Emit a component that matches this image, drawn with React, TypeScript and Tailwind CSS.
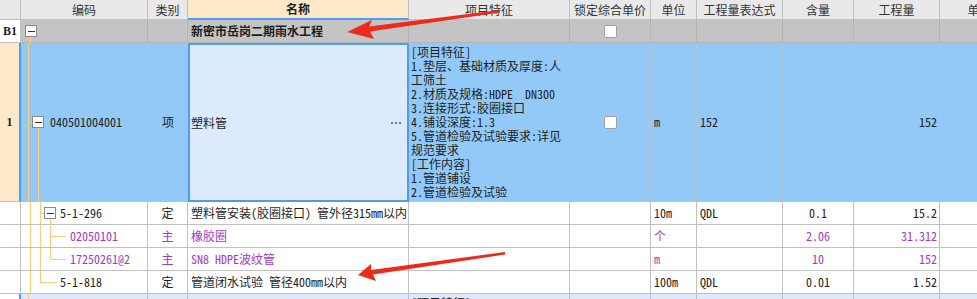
import React from 'react'

const cols = 'grid grid-cols-[21px_127px_40px_221px_161px_81px_46px_86px_71px_86px_80px]'

const features = [
  '[项目特征]',
  '1.垫层、基础材质及厚度:人',
  '工筛土',
  '2.材质及规格:HDPE  DN300',
  '3.连接形式:胶圈接口',
  '4.铺设深度:1.3',
  '5.管道检验及试验要求:详见',
  '规范要求',
  '[工作内容]',
  '1.管道铺设',
  '2.管道检验及试验',
]

function VLine({ left, top = 0, height }: { left: number; top?: number; height?: number }) {
  return (
    <div
      className="absolute w-px bg-[#ffc97e]"
      style={{ left, top, height: height ?? '100%' }}
    />
  )
}

function HLine({ left, top, width }: { left: number; top: number; width: number }) {
  return <div className="absolute h-px bg-[#ffc97e]" style={{ left, top, width }} />
}

function Toggle({ left, top }: { left: number; top: number }) {
  return (
    <div
      className="absolute flex h-[12px] w-[12px] items-center justify-center border border-[#8a8a8a] bg-white"
      style={{ left, top }}
    >
      <div className="h-px w-[7px] bg-[#333]" />
    </div>
  )
}

function Checkbox() {
  return <div className="h-[13px] w-[13px] rounded-[2px] border border-[#a0a0a0] bg-white" />
}

type SubRow = {
  code: string
  type: string
  name: string
  unit: string
  expr: string
  content: string
  qty: string
  purple?: boolean
  indent: number
  tree: React.ReactNode
}

const subRows: SubRow[] = [
  {
    code: '5-1-296',
    type: '定',
    name: '塑料管安装(胶圈接口) 管外径315mm以内',
    unit: '10m',
    expr: 'QDL',
    content: '0.1',
    qty: '15.2',
    indent: 41,
    tree: (
      <>
        <VLine left={9} />
        <VLine left={19} />
        <HLine left={19} top={11} width={4} />
        <Toggle left={23} top={5} />
        <VLine left={29} top={17} height={6} />
      </>
    ),
  },
  {
    code: '02050101',
    type: '主',
    name: '橡胶圈',
    unit: '个',
    expr: '',
    content: '2.06',
    qty: '31.312',
    purple: true,
    indent: 51,
    tree: (
      <>
        <VLine left={9} />
        <VLine left={19} />
        <VLine left={29} />
        <HLine left={29} top={11} width={16} />
      </>
    ),
  },
  {
    code: '17250261@2',
    type: '主',
    name: 'SN8 HDPE波纹管',
    unit: 'm',
    expr: '',
    content: '10',
    qty: '152',
    purple: true,
    indent: 51,
    tree: (
      <>
        <VLine left={9} />
        <VLine left={19} />
        <VLine left={29} height={12} />
        <HLine left={29} top={11} width={16} />
      </>
    ),
  },
  {
    code: '5-1-818',
    type: '定',
    name: '管道闭水试验 管径400mm以内',
    unit: '100m',
    expr: 'QDL',
    content: '0.01',
    qty: '1.52',
    indent: 41,
    tree: (
      <>
        <VLine left={9} />
        <VLine left={19} height={12} />
        <HLine left={19} top={11} width={17} />
      </>
    ),
  },
]

const headers = ['编码', '类别', '名称', '项目特征', '锁定综合单价', '单位', '工程量表达式', '含量', '工程量', '单价']

export default function App() {
  const line = 'border-r border-b border-[#c0c0c0]'
  const blueLine = 'border-r border-b border-r-[#b3c3d3] border-b-[#c0c0c0]'
  const greyLine = 'border-r border-b border-[#b4b4b4]'

  return (
    <div className="relative h-[299px] w-[977px] overflow-hidden bg-white font-['Noto_Sans_CJK_SC',sans-serif] text-[12px] leading-[14px] text-[#1e1e1e] [font-feature-settings:'hwid']">
      {/* header */}
      <div className={`${cols} h-[20px]`}>
        <div className={`${line} bg-[#e9e9e9]`} />
        {headers.map((h) =>
          h === '名称' ? (
            <div
              key={h}
              className="flex items-center justify-center border-r border-b-2 border-r-[#c0c0c0] border-b-[#4a9cf8] bg-[#ffe9c9] font-bold"
            >
              {h}
            </div>
          ) : (
            <div key={h} className={`${line} flex items-center justify-center bg-[#e9e9e9] text-[#333]`}>
              {h}
            </div>
          ),
        )}
      </div>

      {/* B1 */}
      <div className={`${cols} h-[23px]`}>
        <div className={`${line} flex items-center justify-center bg-white font-['Liberation_Serif',serif] font-bold`}>
          B1
        </div>
        <div className={`${greyLine} relative bg-[#c4c4c4]`}>
          <Toggle left={4} top={5} />
          <VLine left={9} top={17} height={6} />
        </div>
        <div className={`${greyLine} bg-[#c4c4c4]`} />
        <div className={`${greyLine} flex items-center bg-[#c4c4c4] pl-[3px] font-bold`}>新密市岳岗二期雨水工程</div>
        <div className={`${greyLine} bg-[#c4c4c4]`} />
        <div className={`${greyLine} flex items-center justify-center bg-[#c4c4c4]`}>
          <Checkbox />
        </div>
        <div className={`${greyLine} bg-[#c4c4c4]`} />
        <div className={`${greyLine} bg-[#c4c4c4]`} />
        <div className={`${greyLine} bg-[#c4c4c4]`} />
        <div className={`${greyLine} bg-[#c4c4c4]`} />
        <div className={`${greyLine} bg-[#c4c4c4]`} />
      </div>

      {/* 1 */}
      <div className={`${cols} h-[159px]`}>
        <div className="flex items-center justify-center border-r-2 border-b border-r-[#4a9cf8] border-b-[#c0c0c0] bg-[#ffe9c9] font-['Liberation_Serif',serif] font-bold">
          1
        </div>
        <div className={`${blueLine} relative flex items-center bg-[#92c9f6] pl-[29px]`}>
          <VLine left={7} />
          <HLine left={7} top={79} width={5} />
          <Toggle left={11} top={73} />
          <VLine left={17} top={85} height={74} />
          040501004001
        </div>
        <div className="flex items-center justify-center border-b border-b-[#c0c0c0] bg-[#92c9f6]">项</div>
        <div className="flex items-center justify-between border-2 border-[#4a9cf8] bg-[#dde9fc] pr-[6px] pl-[1px]">
          <span>塑料管</span>
          <span className="flex gap-[2px]">
            <span className="h-[2px] w-[2px] bg-[#3d88e0]" />
            <span className="h-[2px] w-[2px] bg-[#3d88e0]" />
            <span className="h-[2px] w-[2px] bg-[#3d88e0]" />
          </span>
        </div>
        <div className={`${blueLine} bg-[#92c9f6] pt-[2px] pl-[2px]`}>
          {features.map((f) => (
            <div key={f} className="whitespace-pre">
              {f}
            </div>
          ))}
        </div>
        <div className={`${blueLine} flex items-center justify-center bg-[#92c9f6]`}>
          <Checkbox />
        </div>
        <div className={`${blueLine} flex items-center bg-[#92c9f6] pl-[3px]`}>m</div>
        <div className={`${blueLine} flex items-center bg-[#92c9f6] pl-[3px]`}>152</div>
        <div className={`${blueLine} bg-[#92c9f6]`} />
        <div className={`${blueLine} flex items-center justify-end bg-[#92c9f6] pr-[2px]`}>152</div>
        <div className={`${blueLine} bg-[#92c9f6]`} />
      </div>

      {/* sub rows */}
      {subRows.map((r) => {
        const color = r.purple ? 'text-[#a23cc6]' : ''
        return (
          <div key={r.code} className={`${cols} h-[23px] ${color}`}>
            <div className={`${line} bg-white`} />
            <div className={`${line} relative flex items-center`} style={{ paddingLeft: r.indent - 2 }}>
              {r.tree}
              <span className="relative">{r.code}</span>
            </div>
            <div className={`${line} flex items-center justify-center`}>{r.type}</div>
            <div className={`${line} flex items-center whitespace-pre pl-[3px]`}>{r.name}</div>
            <div className={line} />
            <div className={line} />
            <div className={`${line} flex items-center pl-[3px]`}>{r.unit}</div>
            <div className={`${line} flex items-center pl-[3px]`}>{r.expr}</div>
            <div className={`${line} flex items-center justify-center`}>{r.content}</div>
            <div className={`${line} flex items-center justify-end pr-[2px]`}>{r.qty}</div>
            <div className={line} />
          </div>
        )
      })}

      {/* next item, cut off */}
      <div className={`${cols} h-[23px]`}>
        <div className="border-r-2 border-r-[#4a9cf8] bg-white" />
        <div className="relative border-r border-r-[#b3c3d3] bg-[#dde9fc]">
          <VLine left={7} />
        </div>
        <div className="border-r border-r-[#b3c3d3] bg-[#dde9fc]" />
        <div className="border-r border-r-[#b3c3d3] bg-[#dde9fc]" />
        <div className="border-r border-r-[#b3c3d3] bg-[#dde9fc] pt-[2px] pl-[2px]">[项目特征]</div>
        <div className="border-r border-r-[#b3c3d3] bg-[#dde9fc]" />
        <div className="border-r border-r-[#b3c3d3] bg-[#dde9fc]" />
        <div className="border-r border-r-[#b3c3d3] bg-[#dde9fc]" />
        <div className="border-r border-r-[#b3c3d3] bg-[#dde9fc]" />
        <div className="border-r border-r-[#b3c3d3] bg-[#dde9fc]" />
        <div className="border-r border-r-[#b3c3d3] bg-[#dde9fc]" />
      </div>

      {/* annotation arrows */}
      <svg className="pointer-events-none absolute top-0 left-0" width="977" height="299">
        <polygon
          fill="#ee2a1a"
          points="347,32 372,20 369,26.5 500,10 500,12.5 370,31.5 374,39"
        />
        <polygon
          fill="#ee2a1a"
          points="358,275 371,264 371,270 505,252 505,254.5 373,274.5 376,281"
        />
      </svg>
    </div>
  )
}
